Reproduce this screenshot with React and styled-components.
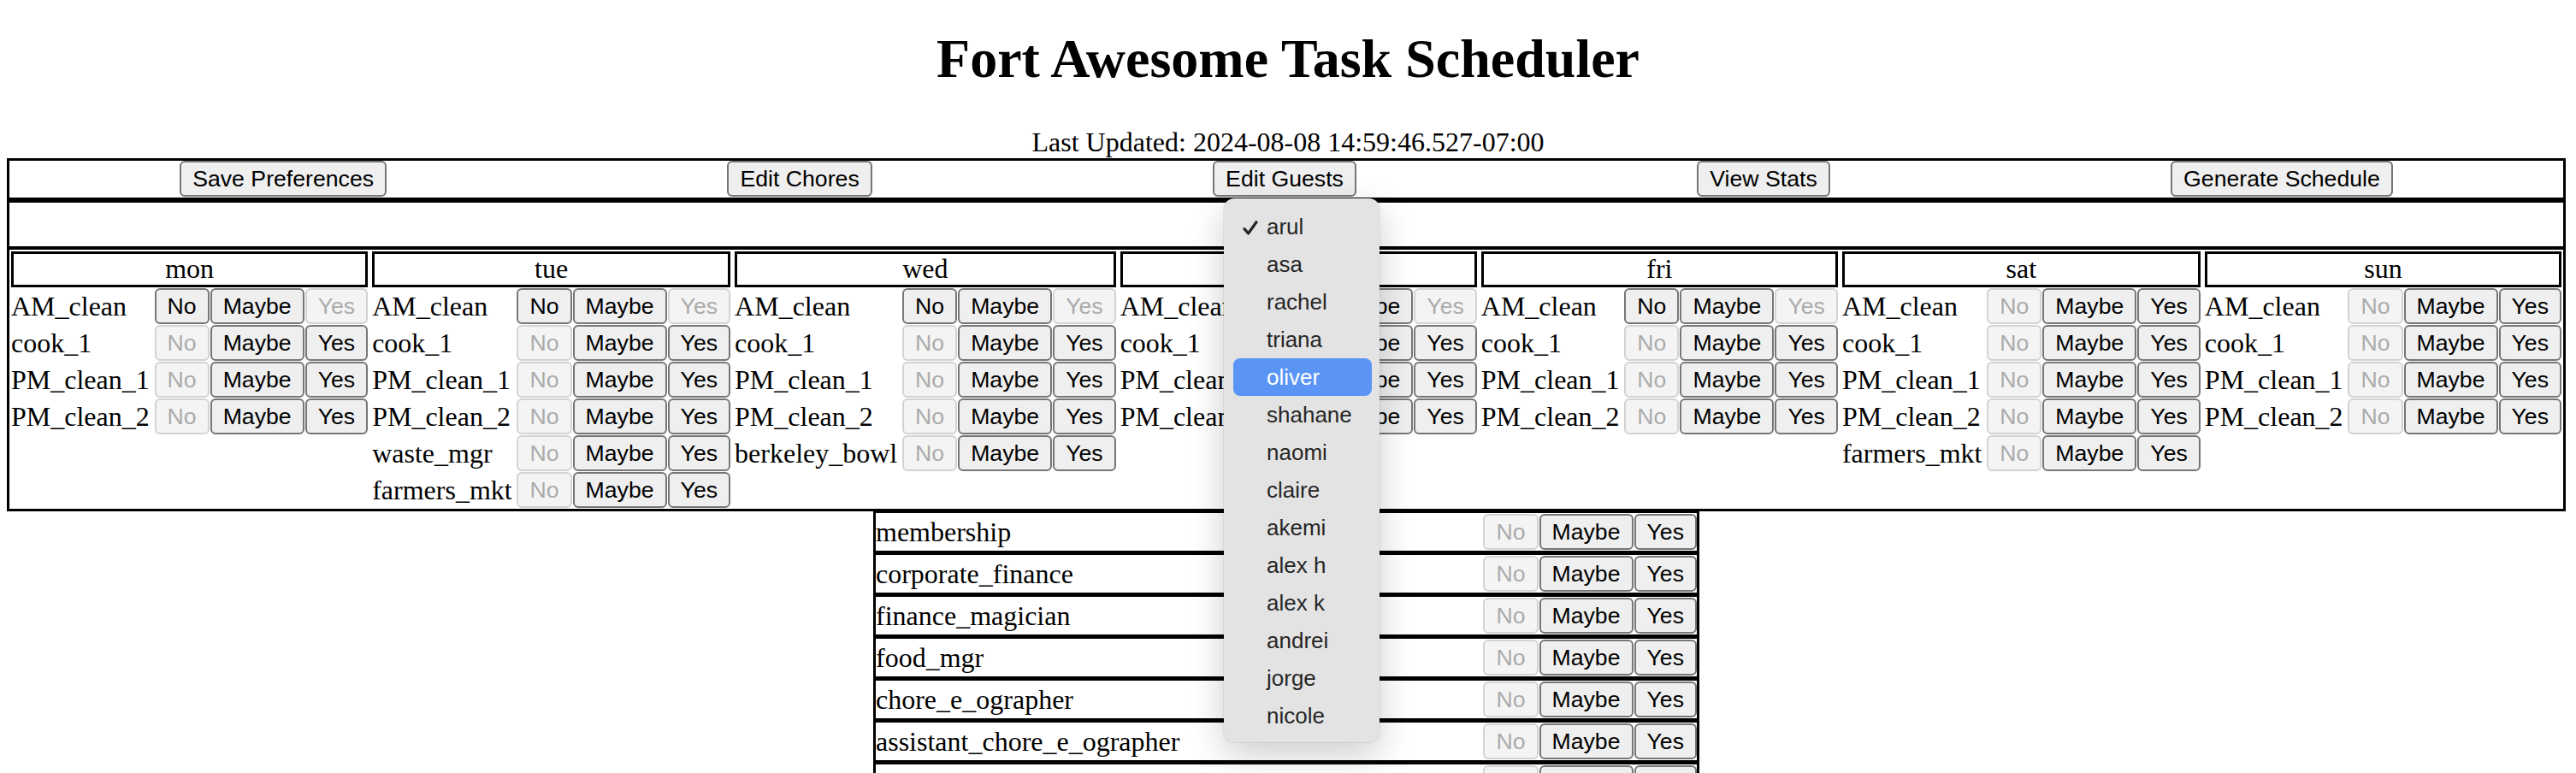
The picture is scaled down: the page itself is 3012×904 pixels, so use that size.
import React from 'react'
import styled, { createGlobalStyle } from 'styled-components'

const days = [
  { name: 'mon', rows: [['AM_clean', 'Yes'], ['cook_1', 'No'], ['PM_clean_1', 'No'], ['PM_clean_2', 'No']] },
  {
    name: 'tue',
    rows: [
      ['AM_clean', 'Yes'],
      ['cook_1', 'No'],
      ['PM_clean_1', 'No'],
      ['PM_clean_2', 'No'],
      ['waste_mgr', 'No'],
      ['farmers_mkt', 'No'],
    ],
  },
  {
    name: 'wed',
    rows: [['AM_clean', 'Yes'], ['cook_1', 'No'], ['PM_clean_1', 'No'], ['PM_clean_2', 'No'], ['berkeley_bowl', 'No']],
  },
  { name: 'thu', rows: [['AM_clean', 'Yes'], ['cook_1', 'No'], ['PM_clean_1', 'No'], ['PM_clean_2', 'No']] },
  { name: 'fri', rows: [['AM_clean', 'Yes'], ['cook_1', 'No'], ['PM_clean_1', 'No'], ['PM_clean_2', 'No']] },
  {
    name: 'sat',
    rows: [['AM_clean', 'No'], ['cook_1', 'No'], ['PM_clean_1', 'No'], ['PM_clean_2', 'No'], ['farmers_mkt', 'No']],
  },
  { name: 'sun', rows: [['AM_clean', 'No'], ['cook_1', 'No'], ['PM_clean_1', 'No'], ['PM_clean_2', 'No']] },
]

const extras = [
  'membership',
  'corporate_finance',
  'finance_magician',
  'food_mgr',
  'chore_e_ographer',
  'assistant_chore_e_ographer',
  'maintenance_mgr',
  'garden_mgr',
]

const guests = [
  'arul', 'asa', 'rachel', 'triana', 'oliver', 'shahane', 'naomi',
  'claire', 'akemi', 'alex h', 'alex k', 'andrei', 'jorge', 'nicole',
]

const choices = ['No', 'Maybe', 'Yes']

const GlobalStyle = createGlobalStyle`
  html, body {
    margin: 0;
    padding: 0;
    overflow: hidden;
    background: #fff;
  }
  body {
    font-family: "Liberation Serif", "Times New Roman", serif;
    font-size: 32px;
    color: #000;
  }
`

const Page = styled.div`
  position: relative;
  padding-top: 32px;
`

const Title = styled.h1`
  margin: 0 0 42px;
  font-size: 64px;
  line-height: 74px;
  font-weight: bold;
  text-align: center;
`

const Updated = styled.div`
  text-align: center;
  line-height: 37px;
`

const Frame = styled.div`
  margin: 0 12px 0 8px;
  border: 3px solid #000;
`

const Toolbar = styled.div`
  display: flex;
  justify-content: space-around;
  align-items: flex-start;
  height: 43px;
  border-bottom: 6px solid #000;
`

const Button = styled.button`
  box-sizing: border-box;
  height: 42px;
  padding: 0 13px;
  margin: 0;
  font-family: "Liberation Sans", Arial, sans-serif;
  font-size: 26.67px;
  line-height: 38px;
  white-space: nowrap;
  color: #000;
  background: #efefef;
  border: 2px solid #767676;
  border-radius: 6px;

  &:disabled {
    color: #ababab;
    background: #f4f4f4;
    border-color: #d3d3d3;
  }
`

const Notice = styled.div`
  height: 51px;
  border-bottom: 4px solid #000;
`

const Week = styled.div`
  display: grid;
  grid-template-columns: repeat(7, auto);
  column-gap: 5px;
  align-items: start;
  padding: 2px 2px 1px;
`

const Day = styled.div`
  display: grid;
  grid-template-columns: 1fr auto auto auto;
  grid-auto-rows: 42px;
  gap: 1px;
`

const DayName = styled.div`
  grid-column: 1 / -1;
  box-sizing: border-box;
  height: 42px;
  border: 3px solid #000;
  text-align: center;
  line-height: 35px;
`

const Chore = styled.div`
  white-space: nowrap;
  line-height: 42px;
`

const Extras = styled.div`
  display: flex;
  justify-content: center;
  margin: 0 12px 0 8px;
`

const ExtraTable = styled.div`
  box-sizing: border-box;
  width: 966px;
  border-left: 3px solid #000;
  border-right: 3px solid #000;
`

const ExtraRow = styled.div`
  display: grid;
  grid-template-columns: 1fr auto auto auto;
  column-gap: 1px;
  align-items: center;
  height: 44px;
  border-top: 5px solid #000;

  &:first-child {
    border-top-width: 2px;
  }
`

const Menu = styled.div`
  position: absolute;
  top: 232px;
  left: 1431px;
  width: 182px;
  box-sizing: border-box;
  padding: 11px 0 9px;
  background: #e3e3e3;
  border-radius: 12px;
  box-shadow: 0 14px 40px rgba(0, 0, 0, 0.2), 0 0 0 1px rgba(0, 0, 0, 0.06);
  font-family: "Liberation Sans", Arial, sans-serif;
  font-size: 26px;
  color: #262626;
`

const MenuItem = styled.div`
  position: relative;
  height: 44px;
  line-height: 44px;
  margin: 0 9px 0 11px;
  padding-left: 39px;
  border-radius: 8px;
  background: ${p => (p.$active ? '#5a95f5' : 'transparent')};
  color: ${p => (p.$active ? '#fff' : 'inherit')};
`

const Check = styled.svg`
  position: absolute;
  left: 11px;
  top: 15px;
`

const Choices = ({ off }) =>
  choices.map(c => (
    <Button key={c} disabled={c === off}>
      {c}
    </Button>
  ))

export default function App() {
  return (
    <Page>
      <GlobalStyle />
      <Title>Fort Awesome Task Scheduler</Title>
      <Updated>Last Updated: 2024-08-08 14:59:46.527-07:00</Updated>
      <Frame>
        <Toolbar>
          <Button>Save Preferences</Button>
          <Button>Edit Chores</Button>
          <Button>Edit Guests</Button>
          <Button>View Stats</Button>
          <Button>Generate Schedule</Button>
        </Toolbar>
        <Notice />
        <Week>
          {days.map(day => (
            <Day key={day.name}>
              <DayName>{day.name}</DayName>
              {day.rows.map(([chore, off]) => (
                <React.Fragment key={chore}>
                  <Chore>{chore}</Chore>
                  <Choices off={off} />
                </React.Fragment>
              ))}
            </Day>
          ))}
        </Week>
      </Frame>
      <Extras>
        <ExtraTable>
          {extras.map(chore => (
            <ExtraRow key={chore}>
              <Chore>{chore}</Chore>
              <Choices off="No" />
            </ExtraRow>
          ))}
        </ExtraTable>
      </Extras>
      <Menu>
        {guests.map((g, i) => (
          <MenuItem key={g} $active={g === 'oliver'}>
            {i === 0 && (
              <Check width="18" height="17" viewBox="0 0 18 17">
                <path
                  d="M2 9.6 L6.6 15 L16 1.8"
                  fill="none"
                  stroke="#262626"
                  strokeWidth="3.2"
                  strokeLinecap="round"
                  strokeLinejoin="round"
                />
              </Check>
            )}
            {g}
          </MenuItem>
        ))}
      </Menu>
    </Page>
  )
}
